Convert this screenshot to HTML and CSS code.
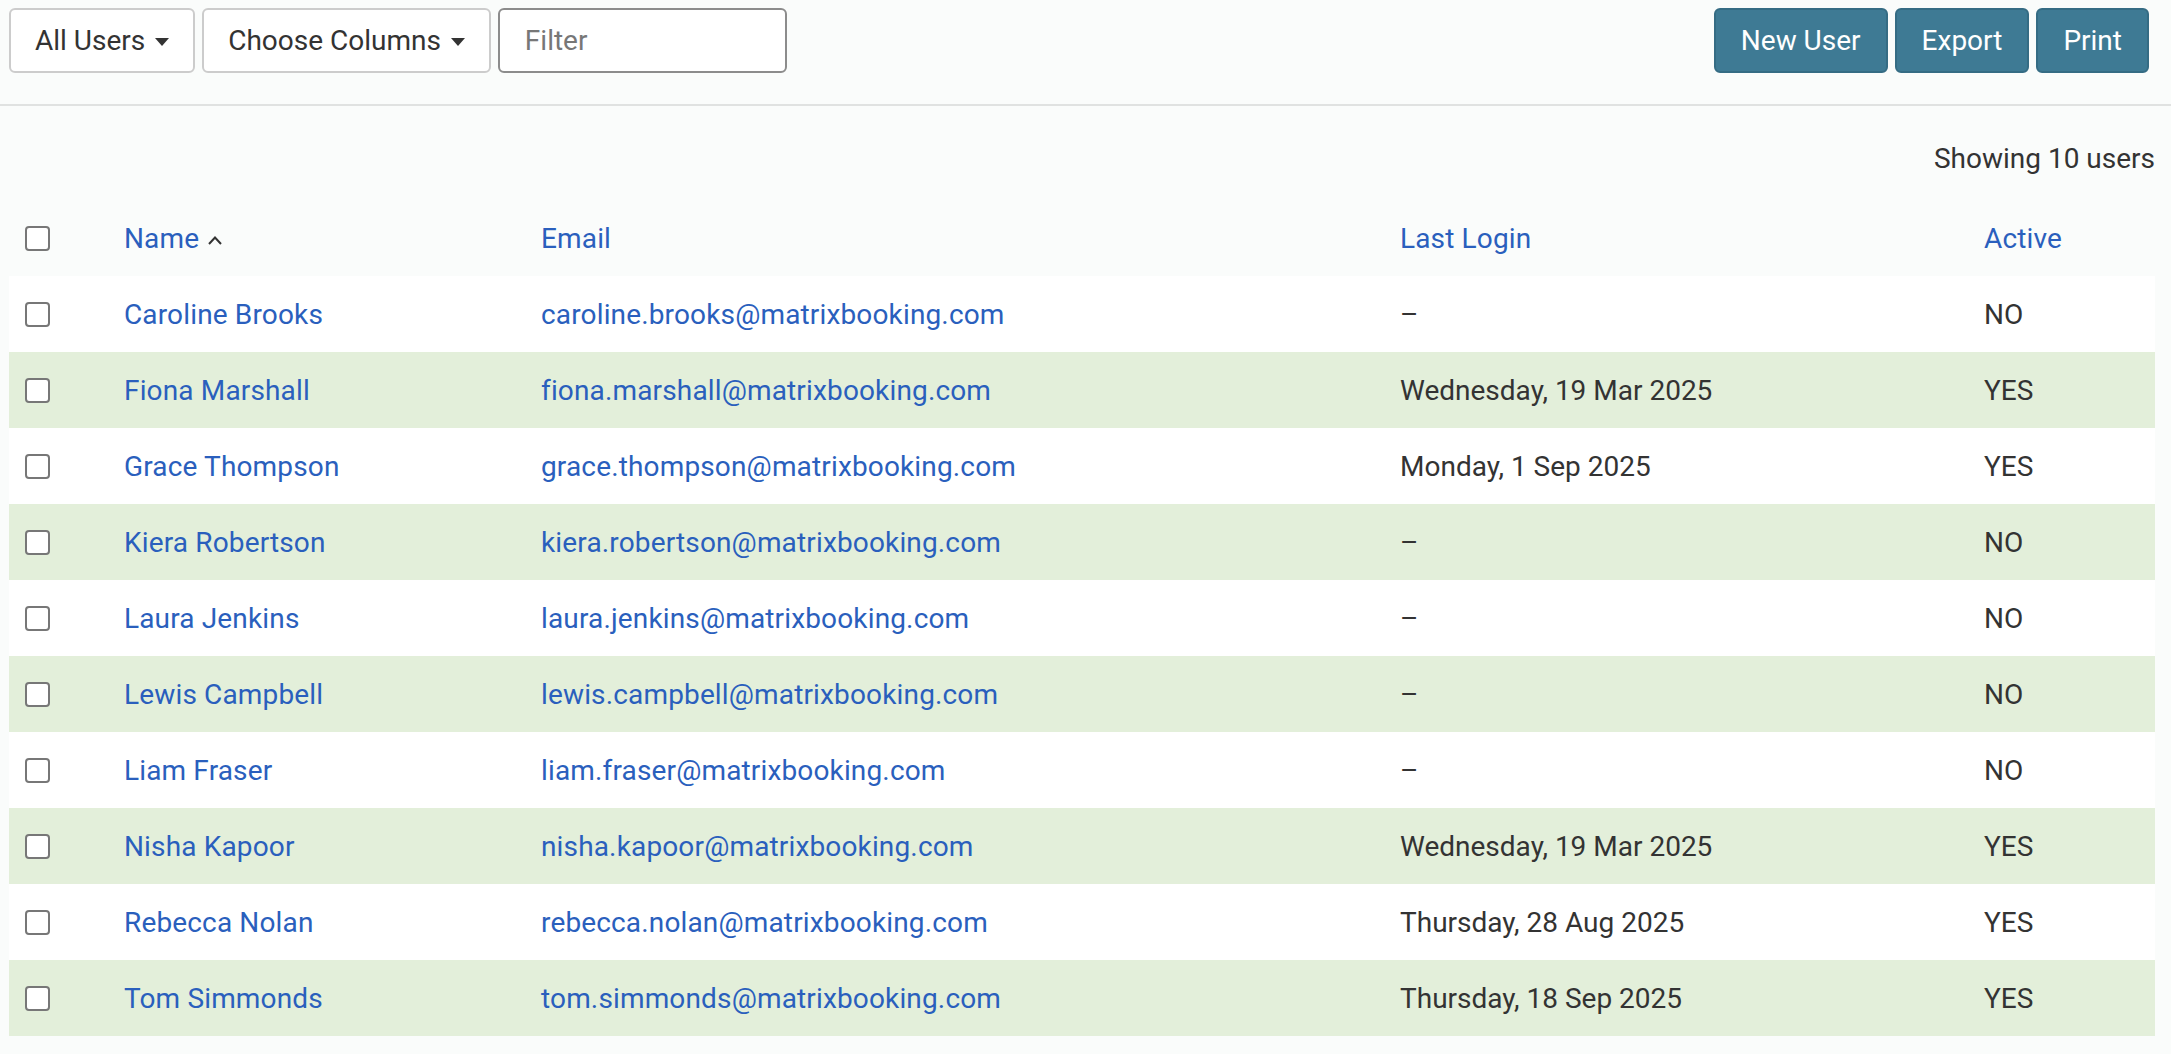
FILE: index.html
```html
<!DOCTYPE html>
<html lang="en">
<head>
  <meta charset="UTF-8" />
  <title>Users</title>
  <link rel="stylesheet" href="styles.css">
</head>
<body>

  <!-- TOOLBAR -->
  <div class="toolbar">
    <div class="toolbar-left">
      <button class="btn btn-default">All Users <span class="caret"></span></button>
      <button class="btn btn-default">Choose Columns <span class="caret"></span></button>
      <input class="filter" type="text" placeholder="Filter">
    </div>
    <div class="toolbar-right">
      <button class="btn btn-primary">New User</button>
      <button class="btn btn-primary">Export</button>
      <button class="btn btn-primary">Print</button>
    </div>
  </div>

  <div class="content">
    <p class="count">Showing 10 users</p>

    <table class="users">
      <colgroup>
        <col class="c-check">
        <col class="c-name">
        <col class="c-email">
        <col class="c-login">
        <col class="c-active">
      </colgroup>
      <thead>
        <tr>
          <th><input type="checkbox" class="check"></th>
          <th><a href="#">Name</a><svg class="sort" width="16" height="10" viewBox="0 0 16 10"><path d="M2 9 L8 2.5 L14 9" fill="none" stroke="#333" stroke-width="2"/></svg></th>
          <th><a href="#">Email</a></th>
          <th><a href="#">Last Login</a></th>
          <th><a href="#">Active</a></th>
        </tr>
      </thead>
      <tbody>
        <tr>
          <td><input type="checkbox" class="check"></td>
          <td><a href="#">Caroline Brooks</a></td>
          <td><a href="#">caroline.brooks@matrixbooking.com</a></td>
          <td>–</td>
          <td>NO</td>
        </tr>
        <tr>
          <td><input type="checkbox" class="check"></td>
          <td><a href="#">Fiona Marshall</a></td>
          <td><a href="#">fiona.marshall@matrixbooking.com</a></td>
          <td>Wednesday, 19 Mar 2025</td>
          <td>YES</td>
        </tr>
        <tr>
          <td><input type="checkbox" class="check"></td>
          <td><a href="#">Grace Thompson</a></td>
          <td><a href="#">grace.thompson@matrixbooking.com</a></td>
          <td>Monday, 1 Sep 2025</td>
          <td>YES</td>
        </tr>
        <tr>
          <td><input type="checkbox" class="check"></td>
          <td><a href="#">Kiera Robertson</a></td>
          <td><a href="#">kiera.robertson@matrixbooking.com</a></td>
          <td>–</td>
          <td>NO</td>
        </tr>
        <tr>
          <td><input type="checkbox" class="check"></td>
          <td><a href="#">Laura Jenkins</a></td>
          <td><a href="#">laura.jenkins@matrixbooking.com</a></td>
          <td>–</td>
          <td>NO</td>
        </tr>
        <tr>
          <td><input type="checkbox" class="check"></td>
          <td><a href="#">Lewis Campbell</a></td>
          <td><a href="#">lewis.campbell@matrixbooking.com</a></td>
          <td>–</td>
          <td>NO</td>
        </tr>
        <tr>
          <td><input type="checkbox" class="check"></td>
          <td><a href="#">Liam Fraser</a></td>
          <td><a href="#">liam.fraser@matrixbooking.com</a></td>
          <td>–</td>
          <td>NO</td>
        </tr>
        <tr>
          <td><input type="checkbox" class="check"></td>
          <td><a href="#">Nisha Kapoor</a></td>
          <td><a href="#">nisha.kapoor@matrixbooking.com</a></td>
          <td>Wednesday, 19 Mar 2025</td>
          <td>YES</td>
        </tr>
        <tr>
          <td><input type="checkbox" class="check"></td>
          <td><a href="#">Rebecca Nolan</a></td>
          <td><a href="#">rebecca.nolan@matrixbooking.com</a></td>
          <td>Thursday, 28 Aug 2025</td>
          <td>YES</td>
        </tr>
        <tr>
          <td><input type="checkbox" class="check"></td>
          <td><a href="#">Tom Simmonds</a></td>
          <td><a href="#">tom.simmonds@matrixbooking.com</a></td>
          <td>Thursday, 18 Sep 2025</td>
          <td>YES</td>
        </tr>
      </tbody>
    </table>
  </div>

</body>
</html>
```

FILE: styles.css
```css
body {
  font-family: Roboto, "Liberation Sans", sans-serif;
  font-size: 28px;
  color: #333;
  background: #fafcfb;
  margin: 0;
}

a {
  color: #2a5fbd;
  text-decoration: none;
  letter-spacing: 0.15px;
}

/* toolbar */
.toolbar {
  display: flex;
  justify-content: space-between;
  padding: 8px 22px 31px 9px;
  border-bottom: 2px solid #e0e2e1;
}

.toolbar-left,
.toolbar-right {
  display: flex;
  gap: 7px;
}

.btn {
  height: 65px;
  box-sizing: border-box;
  padding: 0 24px;
  border: 2px solid #ccc;
  border-radius: 6px;
  font-family: inherit;
  font-size: 28px;
  line-height: 1;
  cursor: pointer;
}

.btn-default {
  background: #fff;
  color: #333;
}

.btn-primary {
  background: #3e7a94;
  border-color: #356c84;
  color: #fff;
}

.toolbar-right .btn {
  padding: 0 25px;
}

.caret {
  display: inline-block;
  width: 0;
  height: 0;
  margin-left: 3px;
  vertical-align: middle;
  border-top: 8px solid #333;
  border-left: 7px solid transparent;
  border-right: 7px solid transparent;
}

.filter {
  width: 289px;
  height: 65px;
  box-sizing: border-box;
  padding: 0 25px;
  border: 2px solid #8c8c8c;
  border-radius: 6px;
  font-family: inherit;
  font-size: 28px;
  color: #333;
  background: #fff;
  outline: none;
}

.filter::placeholder {
  color: #777;
}

/* table */
.content {
  padding: 0 16px 0 9px;
}

.count {
  margin: 33px 0 21px;
  line-height: 40px;
  text-align: right;
}

.users {
  width: 100%;
  table-layout: fixed;
  border-collapse: collapse;
}

.c-check { width: 99px; }
.c-name { width: 417px; }
.c-email { width: 859px; }
.c-login { width: 584px; }
.c-active { width: 187px; }

.users th,
.users td {
  height: 76px;
  padding: 0 16px;
  text-align: left;
  font-weight: normal;
  vertical-align: middle;
  white-space: nowrap;
}

.users tbody tr:nth-child(odd) { background: #fff; }
.users tbody tr:nth-child(even) { background: #e3efda; }

.sort {
  margin-left: 8px;
  vertical-align: middle;
}

.check {
  appearance: none;
  display: block;
  width: 25px;
  height: 25px;
  margin: 0;
  border: 2px solid #777;
  border-radius: 4px;
  background: #fff;
}
```
